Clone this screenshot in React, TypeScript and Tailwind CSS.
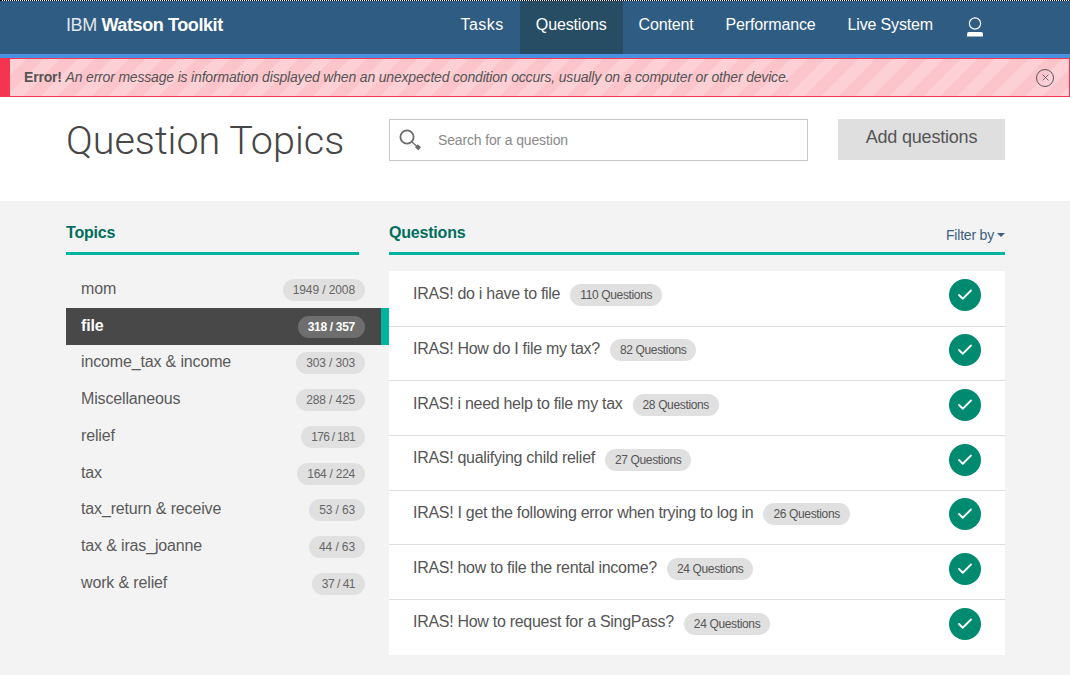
import React from "react";
import { Check, X } from "lucide-react";

const navItems = ["Tasks", "Questions", "Content", "Performance", "Live System"];

const topics = [
  { name: "mom", count: "1949 / 2008", fit: "tracking-[-0.1px]" },
  { name: "file", count: "318 / 357", active: true, fit: "tracking-[-0.3px]" },
  { name: "income_tax & income", count: "303 / 303", fit: "" },
  { name: "Miscellaneous", count: "288 / 425", fit: "" },
  { name: "relief", count: "176 / 181", fit: "tracking-[-0.7px]" },
  { name: "tax", count: "164 / 224", fit: "tracking-[-0.25px]" },
  { name: "tax_return & receive", count: "53 / 63", fit: "" },
  { name: "tax & iras_joanne", count: "44 / 63", fit: "tracking-[-0.1px]" },
  { name: "work & relief", count: "37 / 41", fit: "tracking-[-0.5px]" },
];

const questions = [
  { title: "IRAS! do i have to file", count: 110 },
  { title: "IRAS! How do I file my tax?", count: 82 },
  { title: "IRAS! i need help to file my tax", count: 28 },
  { title: "IRAS! qualifying child relief", count: 27 },
  { title: "IRAS! I get the following error when trying to log in", count: 26 },
  { title: "IRAS! how to file the rental income?", count: 24 },
  { title: "IRAS! How to request for a SingPass?", count: 24 },
];

function UserIcon() {
  return (
    <svg width="16" height="20" viewBox="0 0 16 20" fill="none">
      <circle cx="8" cy="6.5" r="5.6" stroke="white" strokeWidth="1.2" />
      <path d="M0 19.5 V17 Q0 15 2 15 H14 Q16 15 16 17 V19.5 Z" fill="white" />
    </svg>
  );
}

function SearchIcon() {
  return (
    <svg width="24" height="24" viewBox="0 0 24 24" fill="none">
      <circle cx="8" cy="9" r="6.6" stroke="#6b6b6b" strokeWidth="1.8" />
      <path d="M13 14 L17.5 18" stroke="#6b6b6b" strokeWidth="1.3" />
      <path d="M17.3 17.8 L20.7 20.8" stroke="#6b6b6b" strokeWidth="4" />
    </svg>
  );
}

export default function App() {
  return (
    <div className="w-[1070px] h-[675px] overflow-hidden bg-[#f3f3f3] font-['Liberation_Sans',sans-serif]">
      <div className="border-t border-dotted border-black">
        <div className="bg-[#2f5c82] border-b-4 border-[#4a90e2] h-[57px] flex justify-between pl-[66px] pr-[87px]">
          <div className="text-white text-[18px] tracking-[-0.4px] pt-[11px]">
            <span className="opacity-85">IBM </span>
            <span className="font-bold">Watson Toolkit</span>
          </div>
          <div className="flex items-stretch text-white text-[16px]">
            {navItems.map((item) => (
              <div
                key={item}
                className={`px-4 pt-[12px] ${item === "Questions" ? "bg-[#264d63]" : ""} ${
                  item === "Tasks" ? "tracking-[0.5px]" : "tracking-[-0.15px]"
                }`}
              >
                {item}
              </div>
            ))}
            <div className="ml-[18px] pt-[16px]">
              <UserIcon />
            </div>
          </div>
        </div>
      </div>

      <div className="h-[39px] flex items-center justify-between border border-[#f5344f] border-l-[10px] pl-[14px] pr-[15px] text-[14px] tracking-[-0.18px] text-[#555] bg-[repeating-linear-gradient(135deg,#fdd0d5_0px,#fdd0d5_12px,#fcc5cb_12px,#fcc5cb_24px)]">
        <div>
          <span className="font-bold">Error!</span>{" "}
          <span className="italic">
            An error message is information displayed when an unexpected condition occurs, usually on a computer or other device.
          </span>
        </div>
        <div className="w-[18px] h-[18px] rounded-full border border-[#555] flex items-center justify-center">
          <X size={11} strokeWidth={1.8} color="#555" />
        </div>
      </div>

      <div className="bg-white h-[104px] flex items-start pl-[66px] pr-[65px]">
        <h1 className="w-[323px] text-[39.5px] leading-[46px] mt-[21px] font-light font-['Roboto',sans-serif] text-[#464646]">
          Question Topics
        </h1>
        <div className="w-[419px] h-[42px] mt-[22px] border border-[#c8c8c8] flex items-center pl-[9px] gap-[15px] text-[14px] tracking-[-0.15px] text-[#8a8a8a]">
          <SearchIcon />
          <span>Search for a question</span>
        </div>
        <div className="ml-[30px] w-[167px] h-[41px] mt-[22px] bg-[#dfdfdf] text-[#555] text-[18px] tracking-[-0.2px] flex items-center justify-center pb-[5px]">
          Add questions
        </div>
      </div>

      <div className="flex pl-[66px] pt-[20px]">
        <div className="w-[323px]">
          <div className="w-[293px] h-[34px] border-b-[3px] border-[#00b4a0] text-[16px] font-bold text-[#006d5d] tracking-[-0.2px]">
            Topics
          </div>
          <div className="mt-[16px]">
            {topics.map((t) => (
              <div
                key={t.name}
                className={`h-[36.75px] flex items-center justify-between pl-[15px] text-[16px] tracking-[-0.15px] ${
                  t.active
                    ? "bg-[#484848] border-r-[8px] border-[#00b4a0] pr-[16px] font-bold text-white"
                    : "pr-[24px] text-[#5a5a5a]"
                }`}
              >
                <span className="pb-[1px]">{t.name}</span>
                <span
                  className={`mt-[1px] h-[22px] pl-[10px] pr-[10px] rounded-full text-[12px] flex items-center ${t.fit} ${
                    t.active ? "bg-[#6e6e6e] text-white" : "bg-[#e0e0e0] text-[#666] font-normal"
                  }`}
                >
                  {t.count}
                </span>
              </div>
            ))}
          </div>
        </div>

        <div className="w-[616px]">
          <div className="h-[34px] border-b-[3px] border-[#00b4a0] flex justify-between">
            <span className="text-[16px] font-bold text-[#006d5d] tracking-[-0.2px]">Questions</span>
            <span className="text-[14px] text-[#3d5f80] tracking-[-0.2px] flex items-start pt-[4px] gap-[3px]">
              Filter by
              <span className="mt-[8px] w-0 h-0 border-x-[4px] border-x-transparent border-t-[4px] border-t-[#3d5f80]" />
            </span>
          </div>
          <div className="mt-[16px] h-[384px] bg-white">
            {questions.map((q, i) => (
              <div
                key={q.title}
                className={`h-[54.65px] flex items-center pl-6 pr-6 pb-[6px] ${i > 0 ? "border-t border-[#dedede]" : ""}`}
              >
                <span className="text-[16px] text-[#555] tracking-[-0.29px] pb-[3px]">{q.title}</span>
                <span className="ml-[10px] h-[22px] px-[10px] rounded-full bg-[#e0e0e0] text-[12px] tracking-[-0.35px] text-[#555] flex items-center">
                  {q.count} Questions
                </span>
                <span className="ml-auto w-8 h-8 rounded-full bg-[#008a70] flex items-center justify-center">
                  <Check size={18} strokeWidth={2.4} color="white" />
                </span>
              </div>
            ))}
          </div>
        </div>
      </div>
    </div>
  );
}
